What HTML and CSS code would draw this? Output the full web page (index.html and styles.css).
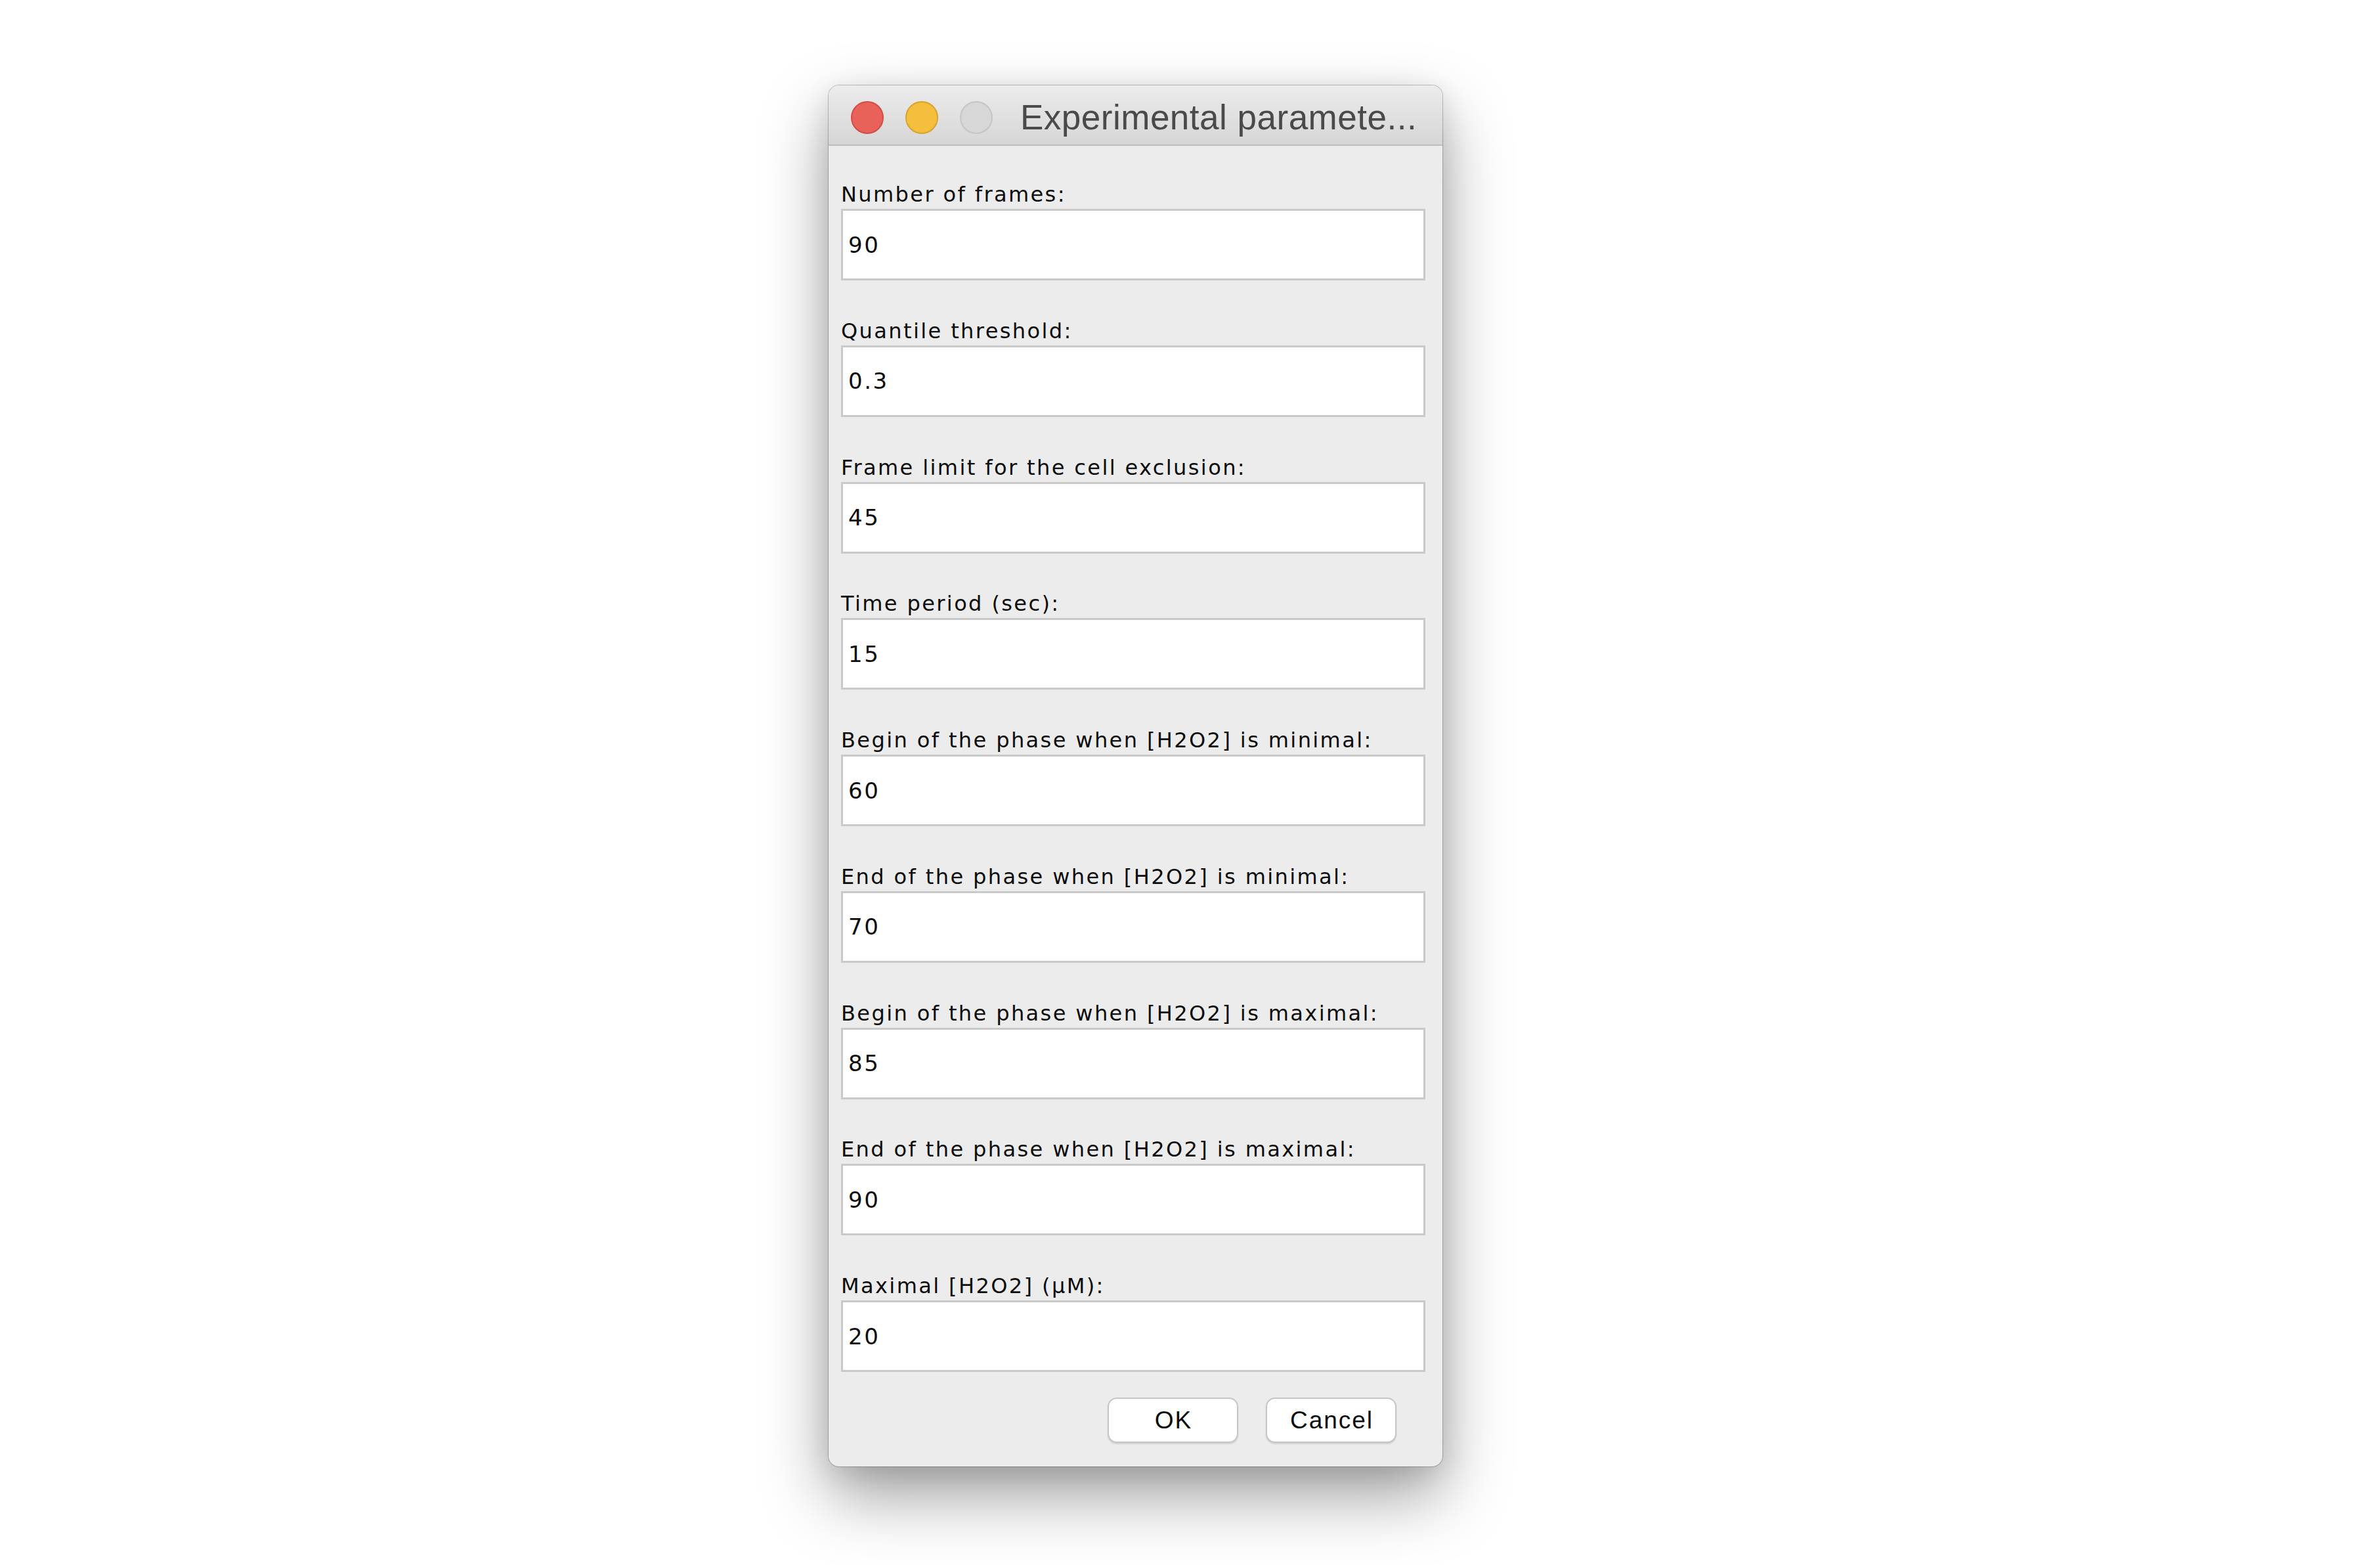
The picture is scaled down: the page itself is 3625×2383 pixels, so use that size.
FILE: index.html
```html
<!DOCTYPE html>
<html>
<head>
<meta charset="utf-8">
<title>Experimental parameters</title>
<link rel="stylesheet" href="styles.css">
</head>
<body>
<div class="stage">
  <div class="window">
    <div class="titlebar">
      <div class="lights">
        <span class="light close"></span>
        <span class="light min"></span>
        <span class="light zoom"></span>
      </div>
      <div class="title">Experimental paramete...</div>
    </div>
    <div class="content">
      <div class="fields">
        <div class="field"><span class="label">Number of frames:</span><div class="input">90</div></div>
        <div class="field"><span class="label">Quantile threshold:</span><div class="input">0.3</div></div>
        <div class="field"><span class="label">Frame limit for the cell exclusion:</span><div class="input">45</div></div>
        <div class="field"><span class="label">Time period (sec):</span><div class="input">15</div></div>
        <div class="field"><span class="label">Begin of the phase when [H2O2] is minimal:</span><div class="input">60</div></div>
        <div class="field"><span class="label">End of the phase when [H2O2] is minimal:</span><div class="input">70</div></div>
        <div class="field"><span class="label">Begin of the phase when [H2O2] is maximal:</span><div class="input">85</div></div>
        <div class="field"><span class="label">End of the phase when [H2O2] is maximal:</span><div class="input">90</div></div>
        <div class="field"><span class="label">Maximal [H2O2] (µM):</span><div class="input">20</div></div>
      </div>
      <div class="buttons">
        <button class="btn">OK</button>
        <button class="btn">Cancel</button>
      </div>
    </div>
  </div>
</div>
</body>
</html>
```
FILE: styles.css
```css
html, body {
  margin: 0;
  padding: 0;
  background: #ffffff;
}
body {
  width: 3625px;
  height: 2383px;
  overflow: hidden;
  font-family: "Liberation Sans", Arial, sans-serif;
}
.stage {
  padding: 130px 0 0 1262px;
}
.window {
  width: 935px;
  height: 2103px;
  box-sizing: border-box;
  background: #ececec;
  border-radius: 16px;
  overflow: hidden;
  display: flex;
  flex-direction: column;
  box-shadow: 0 0 0 1px rgba(0, 0, 0, 0.22),
              0 44px 100px 0 rgba(0, 0, 0, 0.38),
              0 10px 40px rgba(0, 0, 0, 0.10);
}
.titlebar {
  height: 92px;
  flex: none;
  box-sizing: border-box;
  border-bottom: 2px solid #bdbdbd;
  background: linear-gradient(#ececec, #d6d6d6);
  display: flex;
  align-items: center;
  padding-left: 34px;
}
.lights {
  display: flex;
  gap: 33px;
  margin-top: 8px;
}
.light {
  width: 50px;
  height: 50px;
  border-radius: 50%;
  box-sizing: border-box;
  display: block;
}
.close {
  background: #e9625a;
  border: 2px solid #d14c44;
}
.min {
  background: #f3bf3c;
  border: 2px solid #d8a22e;
}
.zoom {
  background: #d7d7d7;
  border: 2px solid #c4c4c4;
}
.title {
  margin-left: 42px;
  margin-top: 8px;
  font-size: 53px;
  line-height: 1.15;
  letter-spacing: 0.5px;
  color: #4a4a4a;
  white-space: nowrap;
}
.content {
  flex: 1;
  padding: 56px 26px 36px 19px;
  display: flex;
  flex-direction: column;
}
.fields {
  display: flex;
  flex-direction: column;
  gap: 58.75px;
}
.field {
  display: flex;
  flex-direction: column;
}
.label {
  display: block;
  font-family: "DejaVu Sans", "Liberation Sans", sans-serif;
  font-size: 32px;
  line-height: 36px;
  letter-spacing: 2.4px;
  color: #0d0d0d;
  margin-bottom: 4px;
  white-space: nowrap;
}
.input {
  height: 109px;
  box-sizing: border-box;
  border: 3px solid #c9c9c9;
  background: #ffffff;
  display: flex;
  align-items: center;
  padding-left: 8px;
  font-family: "DejaVu Sans", "Liberation Sans", sans-serif;
  font-size: 34px;
  letter-spacing: 2.5px;
  color: #0d0d0d;
}
.buttons {
  display: flex;
  justify-content: flex-end;
  gap: 42px;
  margin-top: 39px;
  margin-right: 44px;
}
.btn {
  width: 199px;
  height: 69px;
  box-sizing: border-box;
  border-radius: 14px;
  border: 2px solid #c6c6c6;
  background: #ffffff;
  font-family: inherit;
  font-size: 37px;
  letter-spacing: 2px;
  color: #0d0d0d;
  padding: 0 0 0 2px;
  box-shadow: 0 2px 2px rgba(0, 0, 0, 0.12);
}
```
